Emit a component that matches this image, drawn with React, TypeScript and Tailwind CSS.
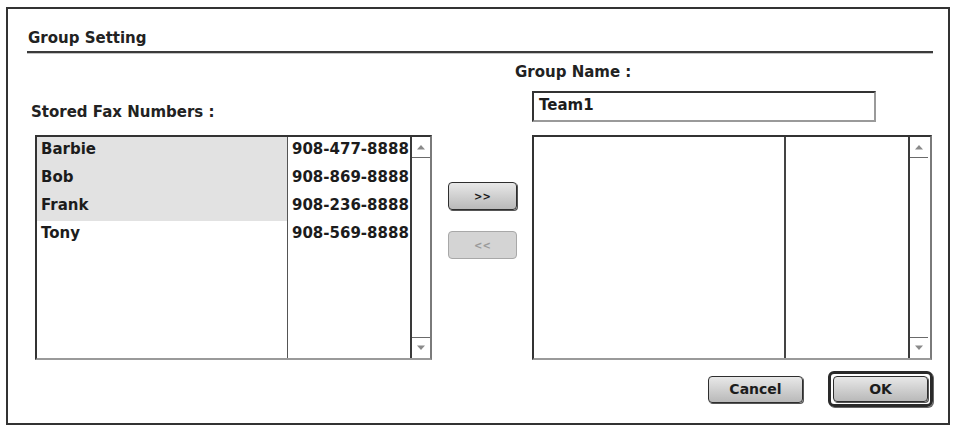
const font = { fontFamily: '"DejaVu Sans", "Liberation Sans", sans-serif' };

const stored = [
  { name: "Barbie", fax: "908-477-8888", sel: true },
  { name: "Bob", fax: "908-869-8888", sel: true },
  { name: "Frank", fax: "908-236-8888", sel: true },
  { name: "Tony", fax: "908-569-8888", sel: false },
];

function Arrow({ up }: { up?: boolean }) {
  return (
    <svg width="10" height="6" viewBox="0 0 10 6">
      <path d={up ? "M1 5.5 L5 1 L9 5.5 Z" : "M1 0.5 L5 5 L9 0.5 Z"} fill="#8a8a8a" />
    </svg>
  );
}

function ScrollBar() {
  return (
    <div className="w-[20px] flex flex-col border-l-2 border-[#3a3a3a] bg-white">
      <div className="h-[21px] flex items-center justify-center border-b border-[#6a6a6a]">
        <Arrow up />
      </div>
      <div className="flex-1" />
      <div className="h-[21px] flex items-center justify-center border-t border-[#6a6a6a]">
        <Arrow />
      </div>
    </div>
  );
}

function ListBox({ rows }: { rows: typeof stored }) {
  return (
    <div className="w-[397px] h-[225px] flex border-2 border-t-[#333] border-l-[#333] border-b-[#9a9a9a] border-r-[#7a7a7a] bg-white">
      <div className="w-[250px] flex flex-col">
        {rows.map((r) => (
          <div
            key={r.name}
            className={`h-[28px] flex items-center pl-[4px] pb-[3px] text-[15px] font-bold text-[#1c1c1c] ${r.sel ? "bg-[#e2e2e2]" : ""}`}
          >
            {r.name}
          </div>
        ))}
      </div>
      <div className="w-[123px] flex flex-col border-l border-[#555]">
        {rows.map((r) => (
          <div key={r.fax} className="h-[28px] flex items-center pl-[4px] pb-[3px] text-[15px] font-bold text-[#1c1c1c] whitespace-nowrap">
            {r.fax}
          </div>
        ))}
      </div>
      <ScrollBar />
    </div>
  );
}

function MacButton({ children, disabled, className = "" }: { children: React.ReactNode; disabled?: boolean; className?: string }) {
  return (
    <div
      className={`flex items-center justify-center rounded-[4px] font-bold ${
        disabled
          ? "border border-[#a8a8a8] bg-[#d4d4d4] text-[#9a9a9a]"
          : "border border-[#2e2e2e] bg-gradient-to-b from-[#e8e8e8] to-[#b9b9b9] text-[#1c1c1c] shadow-[1px_1px_0_#555]"
      } ${className}`}
    >
      {children}
    </div>
  );
}

export default function App() {
  return (
    <div className="w-[956px] h-[428px] bg-white pt-[7px] pl-[6px]" style={font}>
      <div className="w-[944px] h-[418px] border-2 border-[#333] flex flex-col">
        <div className="ml-[19px] mt-[20px] w-[906px] pb-[4px] border-b-2 border-[#3a3a3a] shadow-[0_1px_0_#c4c4c4]">
          <div className="text-[15px] leading-[18px] font-bold text-[#222] pl-[1px]">Group Setting</div>
        </div>

        <div className="flex">
          <div className="ml-[23px] flex flex-col">
            <div className="mt-[50px] text-[15px] leading-[18px] font-bold text-[#222]">Stored Fax Numbers :</div>
            <div className="mt-[14px] ml-[4px]">
              <ListBox rows={stored} />
            </div>
          </div>

          <div className="ml-[16px] mt-[129px] flex flex-col gap-[21px]">
            <MacButton className="w-[69px] h-[28px] text-[10px]">&gt;&gt;</MacButton>
            <MacButton disabled className="w-[69px] h-[28px] text-[10px]">&lt;&lt;</MacButton>
          </div>

          <div className="ml-[15px] flex flex-col">
            <div className="mt-[10px] -ml-[17px] text-[15px] leading-[18px] font-bold text-[#222]">Group Name :</div>
            <div className="mt-[10px] w-[344px] h-[31px] border-2 border-t-[#333] border-l-[#333] border-b-[#9a9a9a] border-r-[#9a9a9a] flex items-center pl-[5px] pb-[2px] text-[15px] font-bold text-[#1c1c1c]">
              Team1
            </div>
            <div className="mt-[13px] w-[400px] h-[225px] flex border-2 border-t-[#333] border-l-[#333] border-b-[#9a9a9a] border-r-[#7a7a7a] bg-white">
              <div className="w-[250px]" />
              <div className="w-[124px] border-l-2 border-[#444]" />
              <ScrollBar />
            </div>
          </div>
        </div>

        <div className="mt-[11px] h-[36px] flex items-center justify-end gap-[25px] pr-[15px]">
          <MacButton className="w-[95px] h-[27px] text-[14px]">Cancel</MacButton>
          <div className="w-[105px] h-[36px] rounded-[6px] border-[3px] border-[#2a2a2a] p-[2px] shadow-[1px_1px_0_#666]">
            <MacButton className="w-full h-full text-[14px]">OK</MacButton>
          </div>
        </div>
      </div>
    </div>
  );
}
